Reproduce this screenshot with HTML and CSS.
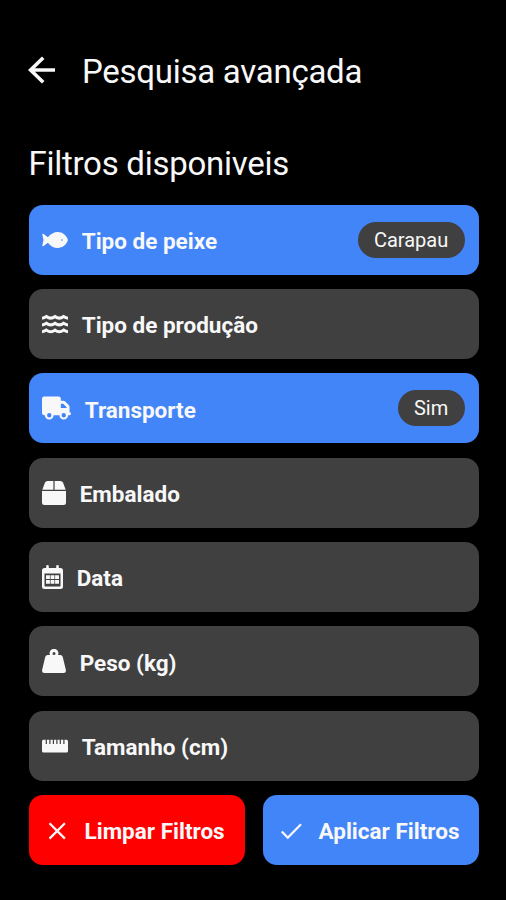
FILE: index.html
```html
<!DOCTYPE html>
<html lang="pt">
<head>
    <meta charset="UTF-8">
    <meta name="viewport" content="width=device-width, initial-scale=1.0">
    <title>Pesquisa avançada</title>

    <link rel="stylesheet" href="styles.css">
</head>
<body>
    <header class="header">
        <svg class="back" width="28" height="28" viewBox="0 0 28 28">
            <path d="M27 14H3M15.2 1.8L2.6 14l12.6 12.2"/>
        </svg>
        <h1>Pesquisa avançada</h1>
    </header>

    <h2>Filtros disponiveis</h2>

    <div class="filters">
        <div class="filter active">
            <svg class="icon" width="26" height="24" viewBox="0 0 26 24">
                <path fill-rule="evenodd" d="M.3 6.500C.2 5.600 1 5.500 1.600 6L5.900 9.300C8.500 6 12 4 15.700 4C20.600 4 24.400 7.500 25.700 11.200Q26 12 25.700 12.800C24.400 16.500 20.600 20 15.700 20C12 20 8.500 18 5.900 14.700L1.600 18C1 18.500.2 18.400.3 17.500L1.500 12ZM20 11.200a.8.8 0 1 0 0 1.600a.8.8 0 1 0 0-1.600Z"/>
            </svg>
            <span class="label">Tipo de peixe</span>
            <span class="value">Carapau</span>
        </div>
        <div class="filter">
            <svg class="icon waves" width="26" height="24" viewBox="0 0 26 24">
                <path d="M0 6.200Q2.200 6 4.400 4.500Q8.700 7.700 13 4.500Q17.300 7.700 21.600 4.500Q23.800 6 26 6.200"/>
                <path d="M0 13Q2.200 12.800 4.400 11.300Q8.700 14.500 13 11.300Q17.300 14.500 21.600 11.300Q23.800 12.800 26 13"/>
                <path d="M0 19.800Q2.200 19.600 4.400 18.100Q8.700 21.300 13 18.100Q17.300 21.300 21.600 18.100Q23.800 19.600 26 19.800"/>
            </svg>
            <span class="label">Tipo de produção</span>
        </div>
        <div class="filter active">
            <svg class="icon" width="29" height="24" viewBox="0 0 640 512">
                <path d="M48 0C21.500 0 0 21.500 0 48V368c0 26.500 21.500 48 48 48H64c0 53 43 96 96 96s96-43 96-96H384c0 53 43 96 96 96s96-43 96-96h32c17.700 0 32-14.300 32-32s-14.300-32-32-32V288 256 237.300c0-17-6.700-33.300-18.700-45.300L512 114.700c-12-12-28.300-18.700-45.300-18.700H416V48c0-26.500-21.500-48-48-48H48zM416 160h50.700L544 237.300V256H416V160zM112 416a48 48 0 1 1 96 0 48 48 0 1 1 -96 0zm368-48a48 48 0 1 1 0 96 48 48 0 1 1 0-96z"/>
            </svg>
            <span class="label">Transporte</span>
            <span class="value">Sim</span>
        </div>
        <div class="filter">
            <svg class="icon" width="24" height="24" viewBox="0 0 24 24">
                <path d="M5.600 0H11.400V8.800H.3L3 1.600Q3.700 0 5.600 0ZM12.600 0H18.400Q20.300 0 21 1.600L23.700 8.800H12.600ZM0 10H24V21.500Q24 24 21.500 24H2.500Q0 24 0 21.500Z"/>
            </svg>
            <span class="label">Embalado</span>
        </div>
        <div class="filter">
            <svg class="icon" width="21" height="24" viewBox="0 0 21 24">
                <path fill-rule="evenodd" d="M4.200 1.300Q4.200 0 5.500 0T6.800 1.300V3H14.200V1.300Q14.200 0 15.500 0T16.800 1.300V3H18.500Q21 3 21 5.500V21.500Q21 24 18.500 24H2.500Q0 24 0 21.500V5.500Q0 3 2.500 3H4.200ZM2.500 8.500V20.800Q2.500 21.500 3.200 21.500H17.800Q18.500 21.500 18.500 20.800V8.500Z"/>
                <path d="M4 10.200h3.900v3.900h-3.900zM8.550 10.200h3.900v3.900h-3.900zM13.100 10.200h3.900v3.900h-3.900zM4 14.900h3.900v3.900h-3.900zM8.550 14.900h3.900v3.900h-3.900zM13.100 14.900h3.900v3.900h-3.900z"/>
            </svg>
            <span class="label">Data</span>
        </div>
        <div class="filter">
            <svg class="icon" width="24" height="24" viewBox="0 0 24 24">
                <path fill-rule="evenodd" d="M8 6A4.400 4.400 0 1 1 16 6H18.400Q20.200 6 20.700 7.800L23.900 21Q24.300 24 21.600 24H2.400Q-.3 24 .1 21L3.300 7.800Q3.800 6 5.600 6ZM12 3a1.500 1.500 0 1 0 0 3a1.500 1.500 0 1 0 0-3Z"/>
            </svg>
            <span class="label">Peso (kg)</span>
        </div>
        <div class="filter">
            <svg class="icon" width="26" height="24" viewBox="0 0 26 24">
                <path d="M1.500 5.700H3.700V10H4.900V5.700H7.300V10H8.500V5.700H10.800V10H12V5.700H14.300V10H15.500V5.700H17.700V10H18.900V5.700H21.300V10H22.500V5.700H24.500Q26 5.700 26 7.200V17Q26 18.500 24.500 18.500H1.500Q0 18.500 0 17V7.200Q0 5.700 1.500 5.700Z"/>
            </svg>
            <span class="label">Tamanho (cm)</span>
        </div>
    </div>

    <div class="buttons">
        <div class="button clear">
            <svg class="icon line" width="28" height="24" viewBox="0 0 28 24">
                <path d="M6.500 4.200l15.400 15.400M21.900 4.200L6.500 19.600"/>
            </svg>
            <span>Limpar Filtros</span>
        </div>
        <div class="button apply">
            <svg class="icon line" width="28" height="24" viewBox="0 0 28 24">
                <path d="M4.800 12.500l6 6.200L24 5.300"/>
            </svg>
            <span>Aplicar Filtros</span>
        </div>
    </div>
</body>
</html>
```
FILE: styles.css
```css
html, body {
    height: 100%;
    overflow: hidden;
}

body {
    margin: 0;
    padding: 49px 27.5px 0 28.5px;
    box-sizing: border-box;
    background: #000;
    color: #f8f8f8;
    font-family: Roboto, sans-serif;
}

h1, h2 {
    margin: 0;
    font-size: 33px;
    font-weight: 400;
    line-height: 46px;
    letter-spacing: -0.27px;
    white-space: nowrap;
}

h2 {
    margin-top: 46px;
}

.header {
    display: flex;
    align-items: center;
    gap: 25.5px;
}

.back {
    position: relative;
    top: -2px;
    left: -1px;
    fill: none;
    stroke: #f8f8f8;
    stroke-width: 3.6;
}

.filters {
    display: flex;
    flex-direction: column;
    gap: 14.35px;
    margin-top: 17.6px;
}

.filter, .button {
    display: flex;
    align-items: center;
    height: 70px;
    box-sizing: border-box;
    border-radius: 14px;
    font-size: 22.5px;
    font-weight: 700;
    white-space: nowrap;
}

.filter {
    gap: 13.5px;
    padding: 0 14px 0 13.7px;
    background: #404040;
}

.filter.active, .apply {
    background: #4285f8;
}

.label {
    flex: 1;
    padding-top: 3px;
}

.value {
    padding: 0 16.3px;
    border-radius: 18px;
    background: #404040;
    font-size: 20px;
    font-weight: 400;
    line-height: 36px;
}

.icon {
    flex-shrink: 0;
    fill: #f8f8f8;
}

.waves, .line {
    fill: none;
    stroke: #f8f8f8;
    stroke-width: 2.3;
}

.waves {
    stroke-width: 3;
}

.buttons {
    display: grid;
    grid-template-columns: 1fr 1fr;
    gap: 18px;
    margin-top: 14.35px;
}

.button {
    gap: 14px;
    padding: 2px 14px 0;
}

.clear {
    background: #f00;
}
```
